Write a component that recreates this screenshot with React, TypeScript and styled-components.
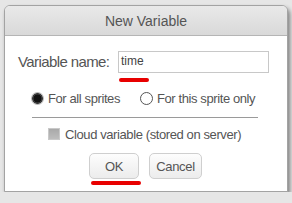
import React from 'react';
import styled, { createGlobalStyle } from 'styled-components';

const GlobalStyle = createGlobalStyle`
  html, body {
    margin: 0;
    padding: 0;
    background: #e6e6e6;
    font-family: 'Liberation Sans', Arial, sans-serif;
  }
`;

const Dialog = styled.div`
  margin: 5px 0 0 4px;
  width: 282px;
  height: 185px;
  box-sizing: content-box;
  border: 1px solid #a3a3a3;
  border-radius: 6px 6px 0 0;
  background: #fff;
  box-shadow: 2px 3px 4px rgba(0, 0, 0, 0.45);
  overflow: hidden;
`;

const Header = styled.div`
  height: 29px;
  border-bottom: 1px solid #b5b5b5;
  background: linear-gradient(#e9e9e9, #d9d9d9);
  display: flex;
  align-items: center;
  justify-content: center;
  color: #555;
  font-size: 14px;
`;

const Body = styled.div`
  display: flex;
  flex-direction: column;
  padding: 0 0 0 13px;
  color: #555;
`;

const NameRow = styled.div`
  display: flex;
  align-items: flex-start;
  margin-top: 15px;
`;

const Label = styled.label`
  width: 100px;
  height: 22px;
  line-height: 22px;
  font-size: 15px;
  letter-spacing: -0.6px;
`;

const Field = styled.div`
  display: flex;
  flex-direction: column;
`;

const Input = styled.div`
  width: 147px;
  height: 20px;
  border: 1px solid #c8c8c8;
  padding-left: 2px;
  line-height: 18px;
  font-size: 12px;
  color: #444;
`;

const Mark = styled.div<{ $w: number; $left: number }>`
  width: ${p => p.$w}px;
  height: 4px;
  margin-left: ${p => p.$left}px;
  border-radius: 2px;
  background: #e80000;
`;

const RadioRow = styled.div`
  display: flex;
  align-items: center;
  height: 13px;
  margin: 10px 0 0 13px;
  font-size: 13px;
  letter-spacing: -0.4px;
`;

const Option = styled.div<{ $width: number }>`
  display: flex;
  align-items: center;
  gap: 4px;
  width: ${p => p.$width}px;
`;

const Radio = styled.span<{ $on?: boolean }>`
  width: 13px;
  height: 13px;
  box-sizing: border-box;
  border-radius: 50%;
  flex: none;
  ${p =>
    p.$on
      ? `background: radial-gradient(circle, #111 0 3.6px, #3c3c3c 4.2px 5px, #b9b9b9 5.6px);`
      : `border: 1px solid #555; background: #fff;`}
`;

const Divider = styled.div`
  width: 226px;
  height: 1px;
  margin: 12px 0 0 14px;
  background: #9a9a9a;
`;

const CheckRow = styled.div`
  display: flex;
  align-items: center;
  gap: 5px;
  height: 12px;
  margin: 10px 0 0 30px;
  font-size: 13px;
  letter-spacing: -0.4px;
`;

const Check = styled.span`
  width: 12px;
  height: 12px;
  box-sizing: border-box;
  border: 1px solid #c9c9c9;
  background: linear-gradient(#a9a9a9, #bdbdbd);
  flex: none;
`;

const Buttons = styled.div`
  display: flex;
  gap: 10px;
  margin: 13px 0 0 71px;
`;

const Button = styled.button<{ $w: number }>`
  width: ${p => p.$w}px;
  height: 26px;
  padding: 0;
  border: 1px solid #cfcfcf;
  border-radius: 5px;
  background: linear-gradient(#fdfdfd, #ececec);
  color: #555;
  font-family: 'Liberation Sans', Arial, sans-serif;
  font-size: 13px;
  letter-spacing: -0.3px;
`;

const App: React.FC = () => {
  return (
    <>
      <GlobalStyle />
      <Dialog>
        <Header>New Variable</Header>
        <Body>
          <NameRow>
            <Label>Variable name:</Label>
            <Field>
              <Input>time</Input>
              <div style={{ height: 5 }} />
              <Mark $w={30} $left={1} />
            </Field>
          </NameRow>
          <RadioRow>
            <Option $width={109}>
              <Radio $on />
              For all sprites
            </Option>
            <Option $width={120}>
              <Radio />
              For this sprite only
            </Option>
          </RadioRow>
          <Divider />
          <CheckRow>
            <Check />
            Cloud variable (stored on server)
          </CheckRow>
          <Buttons>
            <Button $w={50}>OK</Button>
            <Button $w={53}>Cancel</Button>
          </Buttons>
          <div style={{ height: 2 }} />
          <Mark $w={50} $left={73} />
        </Body>
      </Dialog>
    </>
  );
};

export default App;
